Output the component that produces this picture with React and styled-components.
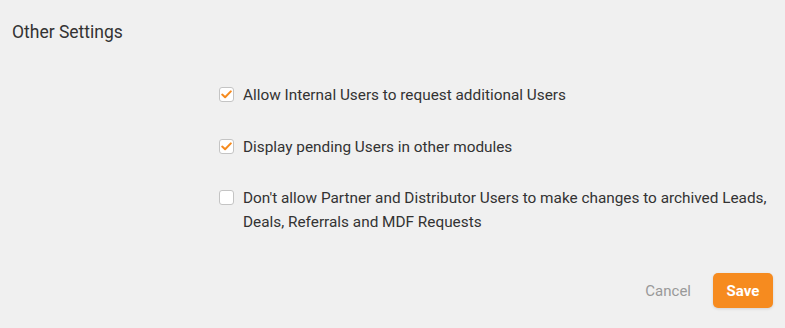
import React, { useState } from "react";
import styled, { createGlobalStyle } from "styled-components";

const Global = createGlobalStyle`
  html, body { margin: 0; padding: 0; background: #f0f0f0; }
  body { font-family: Roboto, "Liberation Sans", sans-serif; color: #333; }
`;

const Page = styled.div`
  width: 785px;
  height: 328px;
  box-sizing: border-box;
  padding: 20px 12px 0 12px;
  display: flex;
  flex-direction: column;
`;

const Title = styled.h2`
  margin: 0;
  font-size: 17.5px;
  font-weight: 400;
  line-height: 24px;
  color: #333;
`;

const Options = styled.div`
  margin-top: 39px;
  margin-left: 207px;
  display: flex;
  flex-direction: column;
  gap: 27.5px;
`;

const Option = styled.label`
  display: flex;
  align-items: flex-start;
  gap: 9px;
  font-size: 15.35px;
  line-height: 24px;
  color: #333;
  cursor: pointer;
`;

const Box = styled.span`
  flex: none;
  width: 13px;
  height: 13px;
  margin-top: 4px;
  border: 1px solid #c4c4c4;
  border-radius: 3px;
  background: #fff;
  display: flex;
  align-items: center;
  justify-content: center;
`;

const Footer = styled.div`
  margin-top: auto;
  margin-bottom: 20px;
  display: flex;
  justify-content: flex-end;
  align-items: center;
  gap: 22px;
`;

const Cancel = styled.button`
  border: none;
  background: none;
  font-family: inherit;
  font-size: 15px;
  color: #999;
  padding: 0;
  cursor: pointer;
`;

const Save = styled.button`
  border: none;
  background: #f68b1f;
  color: #fff;
  font-family: inherit;
  font-weight: 700;
  font-size: 15px;
  width: 60px;
  height: 35px;
  border-radius: 5px;
  box-shadow: 0 1px 3px rgba(0,0,0,0.12);
  cursor: pointer;
`;

const Check = () => (
  <svg width="11" height="9" viewBox="0 0 11 9">
    <path d="M1.2 4.6 L4.1 7.3 L9.8 1.4" fill="none" stroke="#f68b1f" strokeWidth="2" strokeLinecap="round" strokeLinejoin="round" />
  </svg>
);

const items = [
  { text: "Allow Internal Users to request additional Users", checked: true },
  { text: "Display pending Users in other modules", checked: true },
  { text: "Don't allow Partner and Distributor Users to make changes to archived Leads, Deals, Referrals and MDF Requests", checked: false },
];

export default function App() {
  const [state, setState] = useState(items.map((i) => i.checked));
  return (
    <>
      <Global />
      <Page>
        <Title>Other Settings</Title>
        <Options>
          {items.map((it, i) => (
            <Option key={i} onClick={() => setState((s) => s.map((v, j) => (j === i ? !v : v)))}>
              <Box>{state[i] && <Check />}</Box>
              <span>{it.text}</span>
            </Option>
          ))}
        </Options>
        <Footer>
          <Cancel>Cancel</Cancel>
          <Save>Save</Save>
        </Footer>
      </Page>
    </>
  );
}
